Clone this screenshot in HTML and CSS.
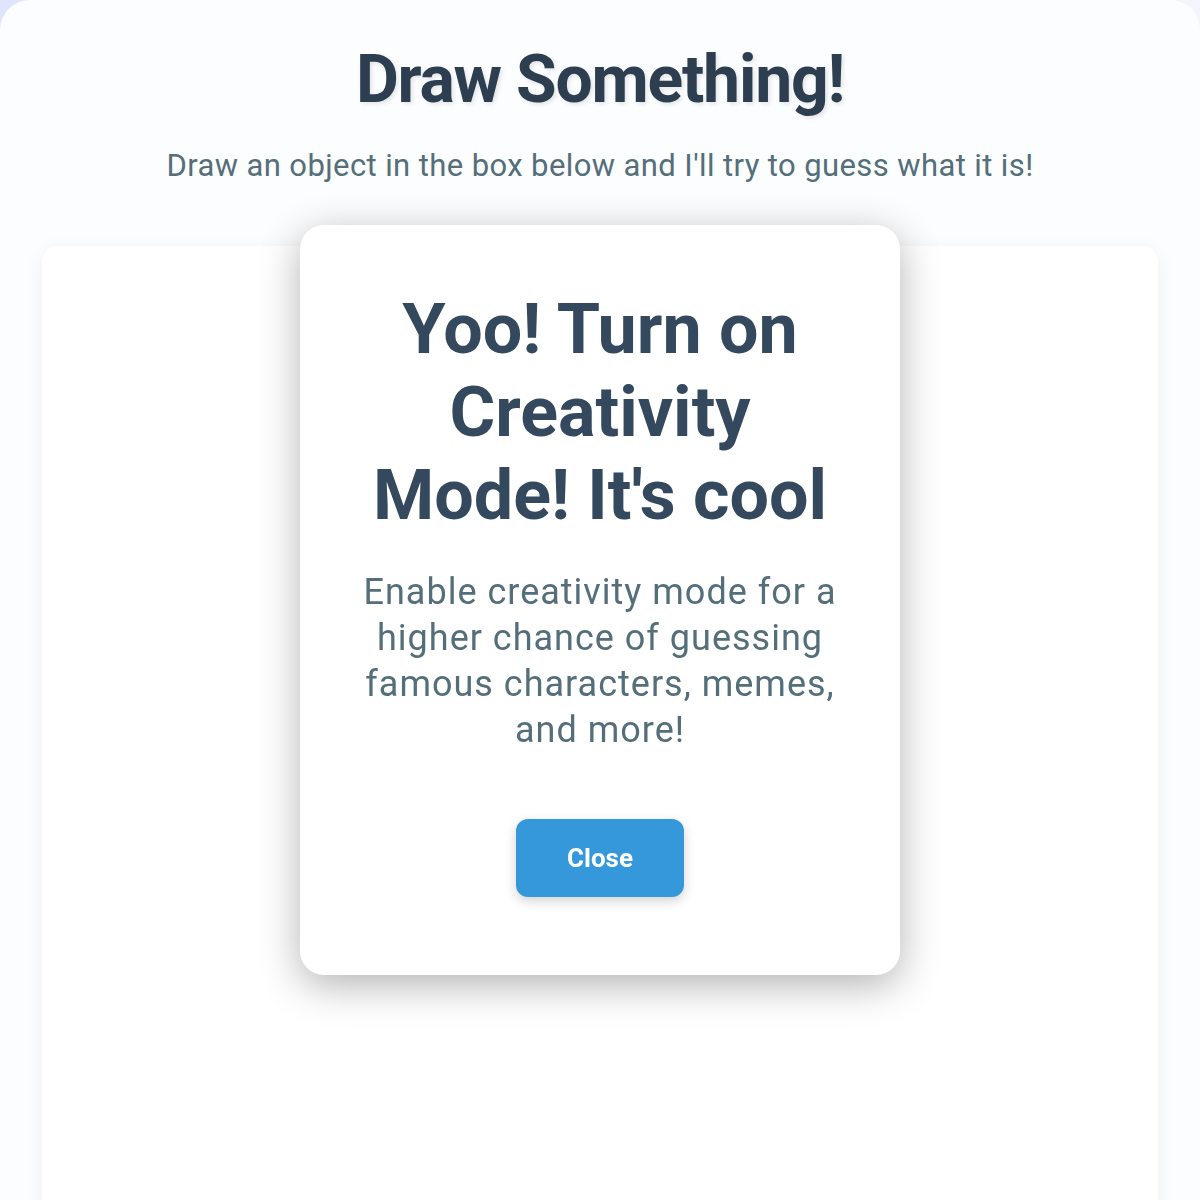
FILE: index.html
```html
<!DOCTYPE html>
<html lang="en">
<head>
  <meta charset="UTF-8">
  <title>Draw Something!</title>
  <link rel="stylesheet" href="styles.css">
</head>
<body>

  <div class="container">
    <h1 class="title">Draw Something!</h1>
    <p class="subtitle">Draw an object in the box below and I'll try to guess what it is!</p>

    <!-- drawing area -->
    <div class="canvas-box"></div>
  </div>

  <!-- creativity mode popup -->
  <div class="modal">
    <h2 class="modal-title">Yoo! Turn on Creativity Mode! It's cool</h2>
    <p class="modal-text">Enable creativity mode for a higher chance of guessing famous characters, memes, and more!</p>
    <button class="close-btn">Close</button>
  </div>

</body>
</html>
```

FILE: styles.css
```css
body {
  margin: 0;
  font-family: Roboto, "Liberation Sans", sans-serif;
  background: linear-gradient(135deg, #dfe5fa 0%, #f3f6fd 40%, #f3f6fd 60%, #e3e9fb 100%);
  min-height: 100vh;
  overflow: hidden;
}

.container {
  max-width: 1200px;
  margin: 0 auto;
  padding: 40px 42px 0;
  box-sizing: border-box;
  background: #fcfdfe;
  border-radius: 30px 30px 0 0;
  text-align: center;
  min-height: 1200px;
}

.title {
  margin: 0;
  font-size: 66px;
  line-height: 80px;
  font-weight: 700;
  letter-spacing: -1.2px;
  color: #2c3e50;
  text-shadow: 2px 2px 4px rgba(0, 0, 0, 0.1);
}

.subtitle {
  margin: 24px 0 58px;
  font-size: 31px;
  line-height: 44px;
  letter-spacing: 0.4px;
  color: #546e7a;
}

.canvas-box {
  height: 1000px;
  background: #fff;
  border-radius: 16px;
  box-shadow: 0 4px 20px rgba(0, 0, 0, 0.06);
}

/* ポップアップ */
.modal {
  position: fixed;
  top: 50%;
  left: 50%;
  transform: translate(-50%, -50%);
  width: 600px;
  box-sizing: border-box;
  padding: 63px 60px 78px;
  background: #fff;
  border-radius: 24px;
  box-shadow: 0 10px 40px rgba(0, 0, 0, 0.3);
  text-align: center;
}

.modal-title {
  margin: 0 0 32px;
  font-size: 70px;
  line-height: 83px;
  font-weight: 700;
  color: #34495e;
}

.modal-text {
  margin: 0 0 66px;
  font-size: 36px;
  line-height: 46px;
  letter-spacing: 1px;
  color: #546e7a;
}

.close-btn {
  padding: 24px 51px;
  font-family: inherit;
  font-size: 26px;
  line-height: 30px;
  font-weight: 700;
  color: #fff;
  background: #3498db;
  border: none;
  border-radius: 12px;
  box-shadow: 0 4px 12px rgba(0, 0, 0, 0.18);
  cursor: pointer;
}
```
